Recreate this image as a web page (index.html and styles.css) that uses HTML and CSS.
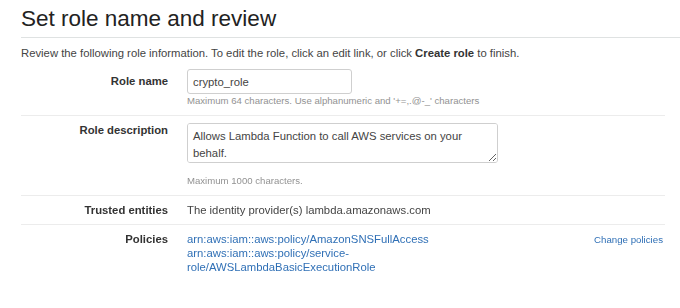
FILE: index.html
```html
<!DOCTYPE html>
<html>
<head>
<meta charset="utf-8">
<link rel="stylesheet" href="styles.css">
</head>
<body>
<div class="page">
  <h1 class="title">Set role name and review</h1>
  <p class="intro">Review the following role information. To edit the role, click an edit link, or click <b>Create role</b> to finish.</p>
  <div class="rows">
    <div class="row row-first">
      <div class="label label-input">Role name</div>
      <div class="value">
        <input class="field" type="text" value="crypto_role">
        <div class="hint">Maximum 64 characters. Use alphanumeric and '+=,.@-_' characters</div>
      </div>
      <div class="action"></div>
    </div>
    <div class="row">
      <div class="label">Role description</div>
      <div class="value">
        <textarea class="area">Allows Lambda Function to call AWS services on your behalf.</textarea>
        <div class="hint hint-area">Maximum 1000 characters.</div>
      </div>
      <div class="action"></div>
    </div>
    <div class="row">
      <div class="label">Trusted entities</div>
      <div class="value text">The identity provider(s) lambda.amazonaws.com</div>
      <div class="action"></div>
    </div>
    <div class="row">
      <div class="label">Policies</div>
      <div class="value links">
        <a class="link" href="#">arn:aws:iam::aws:policy/AmazonSNSFullAccess</a>
        <a class="link" href="#">arn:aws:iam::aws:policy/service-role/AWSLambdaBasicExecutionRole</a>
      </div>
      <div class="action"><a class="link change" href="#">Change policies</a></div>
    </div>
  </div>
</div>
</body>
</html>
```
FILE: styles.css
```css
html, body {
  margin: 0;
  padding: 0;
  background: #fff;
}
body {
  font-family: "Liberation Sans", Arial, sans-serif;
  color: #444;
}
.page {
  padding: 5px 0 0 21px;
}
.title {
  margin: 0;
  font-size: 22.5px;
  line-height: 28px;
  font-weight: normal;
  color: #222;
  padding-bottom: 4px;
  border-bottom: 1px solid #dfe2e2;
}
.intro {
  margin: 8px 0 0;
  font-size: 11.3px;
  line-height: 14px;
  color: #444;
}
.intro b {
  color: #333;
}
.rows {
  width: 644px;
  margin-top: 1px;
}
.row {
  display: grid;
  grid-template-columns: 147px 1fr auto;
  column-gap: 19px;
  padding: 7px 0 7px;
  border-top: 1px solid #ececec;
  font-size: 11.3px;
  line-height: 14px;
}
.row-first {
  border-top: none;
  padding-top: 8px;
}
.label {
  text-align: right;
  font-weight: bold;
  color: #333;
}
.label-input {
  padding-top: 5px;
}
.value {
  display: flex;
  flex-direction: column;
  align-items: flex-start;
}
.action {
  padding-right: 2px;
}
.field {
  box-sizing: border-box;
  width: 165px;
  height: 25px;
  margin: 0;
  padding: 0 5px;
  border: 1px solid #cfcfcf;
  border-radius: 3px;
  font-family: inherit;
  font-size: 11.3px;
  color: #444;
  outline: none;
}
.area {
  box-sizing: border-box;
  width: 311px;
  height: 40px;
  margin: 0 0 11px;
  padding: 4px 5px;
  border: 1px solid #cfcfcf;
  border-radius: 3px;
  font-family: inherit;
  font-size: 11.3px;
  line-height: 17px;
  color: #444;
  outline: none;
}
.hint {
  font-size: 9.6px;
  line-height: 14px;
  color: #929292;
}
.text {
  color: #444;
}
.link {
  color: #3070b6;
  text-decoration: none;
}
.links {
  width: 250px;
}
.change {
  font-size: 9.7px;
}
```
